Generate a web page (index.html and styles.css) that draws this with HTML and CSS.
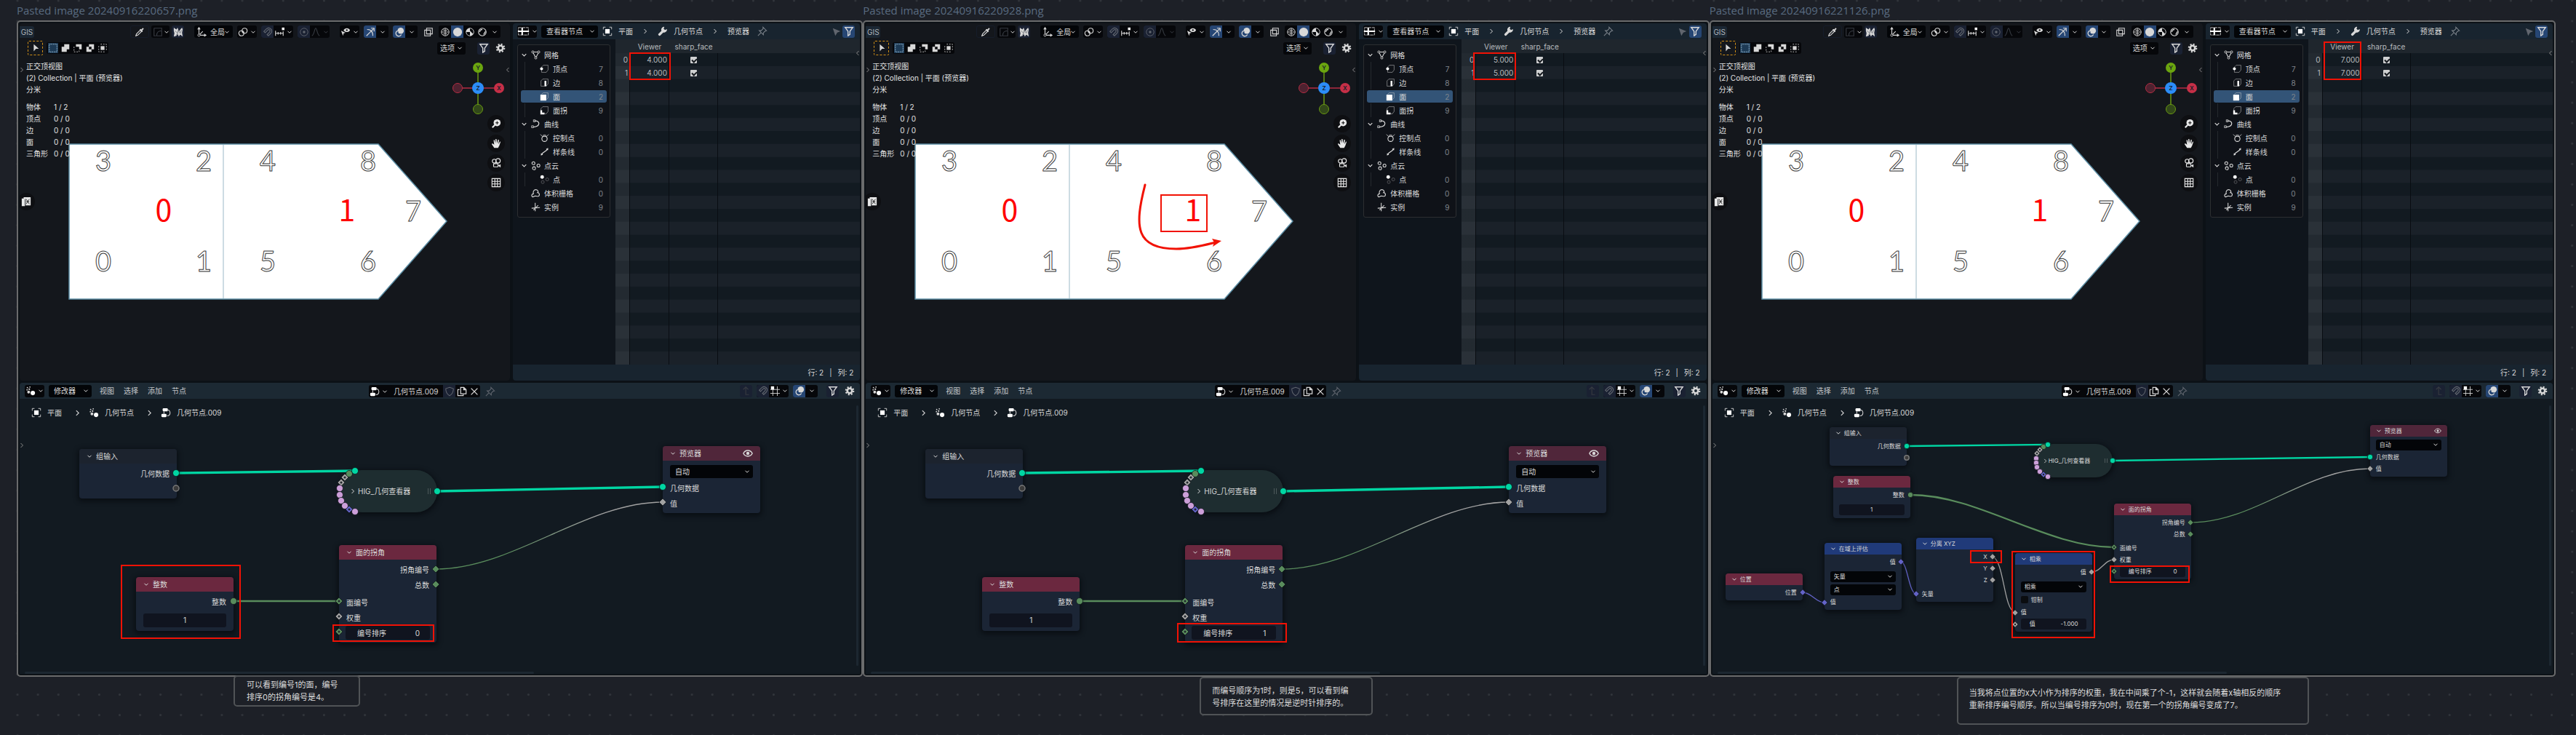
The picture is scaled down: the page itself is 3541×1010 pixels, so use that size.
FILE: index.html
```html
<!DOCTYPE html>
<html lang="zh-CN">
<head>
<meta charset="utf-8">
<title>几何节点：面的拐角</title>
<link rel="stylesheet" href="styles.css">
</head>
<body>
<svg class="sprite" aria-hidden="true">
  <symbol id="i-chev" viewBox="0 0 16 16"><path d="M3 5.500l5 5 5-5" fill="none" stroke="currentColor" stroke-width="2"/></symbol>
  <symbol id="i-right" viewBox="0 0 16 16"><path d="M5 2l6 6-6 6" fill="none" stroke="currentColor" stroke-width="2"/></symbol>
  <symbol id="i-left" viewBox="0 0 16 16"><path d="M11 2L5 8l6 6" fill="none" stroke="currentColor" stroke-width="2"/></symbol>
  <symbol id="i-dropper" viewBox="0 0 16 16"><path d="M2 14l1-3 6-6 2 2-6 6z" fill="none" stroke="currentColor" stroke-width="1.300"/><path d="M8 4l1.500-1 1 1L13 1.500 14.500 3 12 5.500l1 1L12 8z" fill="currentColor"/></symbol>
  <symbol id="i-falloff" viewBox="0 0 16 16"><path d="M2 2h12v3M2 2v12h3M6 14c0-5 3-8 8-8v8z" fill="none" stroke="currentColor" stroke-width="1.300"/></symbol>
  <symbol id="i-noise" viewBox="0 0 16 16"><path d="M1 1l4 3 2-3 2 6 3-4 2-2 1 3-1 5 1 6-4-3-2 3-2-4-2 3-4 1 1-5-1-4z" fill="currentColor"/><path d="M3 6l4 4 1-5 3 5 2-5M5 13l2-3" fill="none" stroke="#6b7078"/></symbol>
  <symbol id="i-axes" viewBox="0 0 16 16"><path d="M4 2v11h10M4 13l6-6M2 4l2-3 2 3M12 11l3 2-3 2" fill="none" stroke="currentColor" stroke-width="1.300"/><circle cx="4" cy="13" r="1.800" fill="#050608" stroke="currentColor"/></symbol>
  <symbol id="i-link" viewBox="0 0 16 16"><circle cx="10.500" cy="6" r="4" fill="none" stroke="currentColor" stroke-width="1.300"/><circle cx="5.500" cy="10" r="4" fill="none" stroke="currentColor" stroke-width="1.300"/><circle cx="8" cy="8" r="1.400" fill="currentColor"/></symbol>
  <symbol id="i-magnet" viewBox="0 0 16 16"><path d="M2 7l4-4c5-4 11 2 7 7l-4 4-2-2 4-4c2-3-1-5-3-3L4 9z" fill="none" stroke="currentColor" stroke-width="1.300"/></symbol>
  <symbol id="i-inc" viewBox="0 0 16 16"><path d="M2 6v8M6 8v4M10 8v4M14 7v7M2 10h12" fill="none" stroke="currentColor" stroke-width="1.300"/><rect x="12" y="1" width="4" height="4" fill="#fff"/></symbol>
  <symbol id="i-prop" viewBox="0 0 16 16"><circle cx="8" cy="8" r="6" fill="none" stroke="currentColor"/><circle cx="8" cy="8" r="2" fill="currentColor"/></symbol>
  <symbol id="i-bell" viewBox="0 0 16 16"><path d="M2 14C6 12 6 2 8 2s2 10 6 12" fill="none" stroke="currentColor" stroke-width="1.300"/></symbol>
  <symbol id="i-eyecur" viewBox="0 0 16 16"><path d="M1 6l7 3-3 1-1 4z" fill="currentColor"/><path d="M5 5c2-4 8-4 10 0-2 4-8 4-10 0z" fill="currentColor"/><circle cx="10" cy="5" r="1.300" fill="#08090c"/></symbol>
  <symbol id="i-gizmo" viewBox="0 0 16 16"><path d="M3 4c6 0 9 4 9 10M2 14L13 3M9 2h5v5" fill="none" stroke="currentColor" stroke-width="1.400"/></symbol>
  <symbol id="i-overlay" viewBox="0 0 16 16"><circle cx="10" cy="6" r="5" fill="currentColor"/><path d="M5 6a4.500 4.500 0 1 0 6 6" fill="none" stroke="currentColor" stroke-width="1.500"/><path d="M6 7a3 3 0 0 0 4 4" fill="none" stroke="#28456f"/></symbol>
  <symbol id="i-xray" viewBox="0 0 16 16"><path d="M5 2h9v9H5zM2 5h9v9H2z" fill="none" stroke="currentColor" stroke-width="1.200"/></symbol>
  <symbol id="i-wire" viewBox="0 0 16 16"><circle cx="8" cy="8" r="6" fill="none" stroke="currentColor"/><path d="M2 8h12M8 2v12M4 4c2 2 6 2 8 0M4 12c2-2 6-2 8 0" fill="none" stroke="currentColor"/></symbol>
  <symbol id="i-solid" viewBox="0 0 16 16"><circle cx="8" cy="8" r="7" fill="currentColor"/></symbol>
  <symbol id="i-mat" viewBox="0 0 16 16"><circle cx="8" cy="8" r="6" fill="none" stroke="currentColor"/><path d="M8 2a6 6 0 0 0-6 6h6v6a6 6 0 0 0 5-3L8 6z" fill="currentColor"/></symbol>
  <symbol id="i-render" viewBox="0 0 16 16"><circle cx="8" cy="8" r="6" fill="none" stroke="currentColor" stroke-width="1.300"/><path d="M4 8a4 4 0 0 1 4-4M10 12l3-5" fill="none" stroke="currentColor" stroke-width="1.500"/></symbol>
  <symbol id="i-filter" viewBox="0 0 16 16"><path d="M2 2h12l-4.500 6v5l-3 2V8z" fill="none" stroke="currentColor" stroke-width="1.500"/></symbol>
  <symbol id="i-gear" viewBox="0 0 16 16"><circle cx="8" cy="8" r="3.700" fill="none" stroke="currentColor" stroke-width="3"/><circle cx="8" cy="8" r="6" fill="none" stroke="currentColor" stroke-width="2.500" stroke-dasharray="2.300 2.412"/></symbol>
  <symbol id="i-arrow" viewBox="0 0 16 16"><path d="M5 2l8 7H8.500L5 13z" fill="currentColor"/></symbol>
  <symbol id="i-arrow2" viewBox="0 0 16 16"><path d="M2 3l12 5-5 2-3 5z" fill="currentColor"/></symbol>
  <symbol id="i-s1" viewBox="0 0 16 16"><rect width="16" height="16" fill="#1d3a55"/><rect x="2" y="2" width="12" height="12" fill="none" stroke="#9fc0d8" stroke-dasharray="2 1"/></symbol>
  <symbol id="i-s2" viewBox="0 0 16 16"><path d="M6 2h8v8h-4v4H2V6h4z" fill="currentColor"/></symbol>
  <symbol id="i-s3" viewBox="0 0 16 16"><path d="M5 2h9v8h-4V6H5z" fill="currentColor"/><path d="M2 6v8h8v-3" fill="none" stroke="currentColor" stroke-dasharray="2 2"/></symbol>
  <symbol id="i-s4" viewBox="0 0 16 16"><path d="M6 2h8v8h-4v4H2V6h4zM6 6v4h4V6z" fill="currentColor" fill-rule="evenodd"/></symbol>
  <symbol id="i-s5" viewBox="0 0 16 16"><rect x="5" y="5" width="6" height="6" fill="currentColor"/><path d="M5 2h9v9M2 5v9h9" fill="none" stroke="currentColor" stroke-dasharray="2 2"/></symbol>
  <symbol id="i-zoom" viewBox="0 0 16 16"><circle cx="9.500" cy="6.500" r="5.500" fill="currentColor"/><path d="M6 10l-4 4" stroke="currentColor" stroke-width="2.500"/><path d="M9.500 4v5M7 6.500h5" stroke="#111" stroke-width="1.200"/></symbol>
  <symbol id="i-hand" viewBox="0 0 16 16"><path d="M5 15L1 9l1-1 3 2-1-7 1.500-.500L7 8 7 1h1.500L9.500 8 11 2l1.500.500L11.500 9 14 5l1 .500-2 6-2 3.500z" fill="currentColor"/></symbol>
  <symbol id="i-cam" viewBox="0 0 16 16"><circle cx="5" cy="5" r="3" fill="none" stroke="currentColor" stroke-width="1.300"/><circle cx="11" cy="4.500" r="3.500" fill="none" stroke="currentColor" stroke-width="1.300"/><rect x="4" y="9" width="7" height="5" rx="1" fill="none" stroke="currentColor" stroke-width="1.300"/><path d="M11 12l4-2v5z" fill="currentColor"/></symbol>
  <symbol id="i-grid" viewBox="0 0 16 16"><path d="M1.500 1.500h13v13h-13zM1.500 6h13M1.500 10h13M6 1.500v13M10 1.500v13" fill="none" stroke="currentColor" stroke-width="1.300"/></symbol>
  <symbol id="i-strip" viewBox="0 0 16 16"><path d="M1 3h5v12H1zM4 1h11v13H7V4H4z" fill="currentColor"/><path d="M8 4l5 8M13 4l-5 8M8 8h5" stroke="#222"/></symbol>
  <symbol id="i-sheet" viewBox="0 0 20 16"><path d="M2 2h16v12H2z" fill="none" stroke="currentColor" stroke-dasharray="5 1"/><path d="M8 2v12M1 8h18" stroke="#fff" stroke-width="2.500"/></symbol>
  <symbol id="i-object" viewBox="0 0 16 16"><rect x="4.500" y="4.500" width="7" height="7" fill="#fff"/><path d="M1.500 5V1.500H5M11 1.500h3.500V5M14.500 11v3.500H11M5 14.500H1.500V11" fill="none" stroke="currentColor"/></symbol>
  <symbol id="i-wrench" viewBox="0 0 16 16"><path d="M3 13L9 7" stroke="currentColor" stroke-width="4" stroke-linecap="round"/><path d="M14.500 4.500A4.500 4.500 0 1 1 10.500 1L9.500 4l2 2z" fill="currentColor"/></symbol>
  <symbol id="i-pin" viewBox="0 0 16 16"><path d="M9 1.500L14.500 7l-2 .500-3 3 0 3L3 7h3l3-3zM5.500 10.500L1 15" fill="none" stroke="currentColor" stroke-width="1.200"/></symbol>
  <symbol id="i-mesh" viewBox="0 0 16 16"><path d="M3 3h10L8 13z" fill="none" stroke="currentColor" stroke-width="1.300"/><g fill="#101318" stroke="currentColor" stroke-width="1.200"><circle cx="3" cy="3" r="1.800"/><circle cx="13" cy="3" r="1.800"/><circle cx="8" cy="13" r="1.800"/></g></symbol>
  <symbol id="i-vert" viewBox="0 0 16 16"><path d="M3 5l3-3h8v8l-3 4H3z" fill="none" stroke="currentColor" opacity=".6"/><circle cx="3" cy="8" r="2.500" fill="#fff"/></symbol>
  <symbol id="i-edge" viewBox="0 0 16 16"><path d="M2 5l3-3h9v8l-3 4H2z" fill="none" stroke="currentColor" opacity=".6"/><rect x="8" y="5" width="3" height="9" fill="#fff"/></symbol>
  <symbol id="i-face" viewBox="0 0 16 16"><path d="M3 4l3-2h8v8l-2 3" fill="none" stroke="currentColor" opacity=".6"/><rect x="1" y="5" width="10" height="10" fill="#fff"/></symbol>
  <symbol id="i-corner" viewBox="0 0 16 16"><path d="M2 9V5l3-3h9v8l-3 4H8" fill="none" stroke="currentColor" opacity=".6"/><path d="M1 8h3v4h4v3H1z" fill="#fff"/></symbol>
  <symbol id="i-curve" viewBox="0 0 16 16"><path d="M6 3c9-2 11 9-2 10" fill="none" stroke="currentColor" stroke-width="1.500"/><rect x="4" y="1" width="3" height="3" fill="none" stroke="currentColor"/><rect x="1" y="11" width="3" height="3" fill="none" stroke="currentColor"/></symbol>
  <symbol id="i-ctrl" viewBox="0 0 16 16"><circle cx="8" cy="9.500" r="4.500" fill="none" stroke="currentColor" stroke-width="1.400"/><path d="M1 2l4 4M15 2l-4 4M5 4l3-1 3 1" fill="none" stroke="currentColor"/></symbol>
  <symbol id="i-spline" viewBox="0 0 16 16"><path d="M2 14l3-4 6-4 3-4M2 11l3 2M11 3l3 2" fill="none" stroke="currentColor" stroke-width="1.500"/></symbol>
  <symbol id="i-cloud" viewBox="0 0 16 16"><g fill="none" stroke="currentColor" stroke-width="1.300"><circle cx="4" cy="4" r="2.500"/><circle cx="12.500" cy="8" r="2.500"/><circle cx="5" cy="12.500" r="2.500"/></g></symbol>
  <symbol id="i-point" viewBox="0 0 16 16"><circle cx="4" cy="4" r="3" fill="#fff"/><g fill="none" stroke="currentColor" opacity=".4"><circle cx="12.500" cy="8" r="2.500"/><circle cx="5" cy="12.500" r="2.500"/></g></symbol>
  <symbol id="i-volume" viewBox="0 0 16 16"><path d="M2 14c-2-3 0-5 2-5-1-4 1-7 4-7s5 3 3 5c3 0 4 4 2 6-3 1-5-1-7 0s-3 2-4 1z" fill="none" stroke="currentColor" stroke-width="1.400"/></symbol>
  <symbol id="i-inst" viewBox="0 0 16 16"><path d="M7 1v14M1 10l14-1M4 13l8-8" fill="none" stroke="currentColor" stroke-width="1.300"/></symbol>
  <symbol id="i-geo" viewBox="0 0 16 16"><circle cx="11.500" cy="11.500" r="3.500" fill="#fff"/><circle cx="5" cy="10" r="2.200" fill="currentColor"/><g fill="currentColor"><circle cx="3" cy="3" r="1"/><circle cx="7" cy="2" r="1"/><circle cx="6" cy="5.500" r="1.300"/><circle cx="2.500" cy="6.500" r="1"/></g></symbol>
  <symbol id="i-tree" viewBox="0 0 16 16"><rect x="3" y="1" width="8" height="5" rx="1.500" fill="#fff"/><rect x="1" y="10" width="8" height="5" rx="1.500" fill="#fff"/><path d="M11 4c5 0 5 9-1 9M5 6v4" fill="none" stroke="currentColor" stroke-width="1.200"/></symbol>
  <symbol id="i-shield" viewBox="0 0 16 16"><path d="M8 1.500l6 2c0 5-2 9-6 11-4-2-6-6-6-11z" fill="none" stroke="currentColor" stroke-width="1.200"/></symbol>
  <symbol id="i-copy" viewBox="0 0 16 16"><path d="M6 1.500h5l3.500 3.500v6.500H6zM4 5H1.500v9.500H10v-2" fill="none" stroke="currentColor" stroke-width="1.400"/><path d="M10 1v5h5z" fill="currentColor"/></symbol>
  <symbol id="i-close" viewBox="0 0 16 16"><path d="M3 3l10 10M13 3L3 13" stroke="currentColor" stroke-width="1.500"/></symbol>
  <symbol id="i-up" viewBox="0 0 16 16"><path d="M12 14H7V2M3 6l4-4 4 4" fill="none" stroke="currentColor" stroke-width="1.300"/></symbol>
  <symbol id="i-snapgrid" viewBox="0 0 16 16"><path d="M5 4v12M12 1v15M1 6h15M1 12h15" fill="none" stroke="currentColor"/><rect x="2" y="1" width="5" height="5" fill="#fff"/></symbol>
  <symbol id="i-eye" viewBox="0 0 16 16"><path d="M1 8c3-6 11-6 14 0-3 6-11 6-14 0z" fill="none" stroke="currentColor" stroke-width="1.600"/><circle cx="8" cy="8" r="2.500" fill="currentColor"/></symbol>
</svg>
<main class="board" id="board"></main>
<script src="board.js"></script>
</body>
</html>
```
FILE: styles.css
```css
* { box-sizing: border-box; }
body {
  margin: 0;
  min-height: 100vh;
  background-color: #1d2027;
  background-image: radial-gradient(circle at 14px 14px, #31353b 1px, transparent 2px);
  background-size: calc(100% / 126) calc(100% / 36);
  background-position: 10px 15px;
  color: #d8d8d8;
  font: 10px/16px Inter, "Noto Sans CJK SC", sans-serif;
}
button, input, select {
  margin: 0; padding: 0; border: 0; background: none; color: inherit;
  font: inherit; appearance: none; outline: 0; min-width: 0;
}
.sprite { position: absolute; width: 0; height: 0; }
.ic { width: 14px; height: 14px; flex: none; display: block; }
.ic.sm { width: 8px; height: 8px; }
.ic.wide { width: 17px; }

.board { display: grid; grid-template-columns: repeat(3, minmax(0, 1fr)); padding: 0 28px 0 23px; }
.card-title { margin: 0; height: 28px; font: 15px/28px "Open Sans", sans-serif; color: #596b80; white-space: nowrap; }
.panel {
  position: relative; border: 2px solid #6a6b6c; border-radius: 5px;
  background: #0c1116; padding: 2px; overflow: hidden;
  display: flex; flex-direction: column; gap: 3px;
}
.top { display: grid; grid-template-columns: 674px minmax(0, 1fr); gap: 4px; height: 491px; }
.marks { position: absolute; left: -2px; top: -2px; width: 1164px; height: 900px; pointer-events: none; }
.marks rect { fill: none; stroke: #f11205; stroke-width: 2; }
.marks .stroke { fill: none; stroke: #f11205; stroke-width: 3; stroke-linecap: round; }
.marks .head { fill: #f11205; }

/* toolbars */
.bar { display: flex; align-items: center; gap: 6px; }
.push { margin-left: auto; }
.grp { display: flex; height: 17px; background: #06070a; border-radius: 3px; align-items: center; overflow: hidden; flex: none; }
.grp > button, .tb { height: 17px; min-width: 17px; display: flex; align-items: center; justify-content: center; gap: 3px; padding: 0 1px; flex: none; }
.grp > .mini { min-width: 8px; padding: 0; }
.tint { background: #1a2132; }
.blue { background: #264674; }
.dim { color: #60656e; }
.faint { color: #363a41; }
.grp > .pick { width: 27px; padding: 0; }
.tb { border-radius: 3px; }
.drop { position: relative; display: flex; align-items: center; background: #030508; border-radius: 3px; height: 17px; flex: none; }
.drop select { width: 100%; height: 100%; padding: 0 14px 0 7px; }
.drop .ic { position: absolute; right: 4px; pointer-events: none; }

/* 3D viewport */
.view { position: relative; background: #14171c; border-radius: 4px; overflow: hidden; padding-top: 3px; }
.scene { position: absolute; left: 0; top: 0; width: 674px; height: 491px; }
.view .bar, .info, .stats { position: relative; }
.gis { width: 20px; height: 16px; background: #1b2733; border-radius: 0 3px 3px 0; flex: none; text-align: center; color: #aeb4ba; }
.tools { padding-right: 14px; height: 17px; }
.tools .first { margin-left: 126px; margin-right: -3px; width: 26px; border: 1px solid #161d2a; }
.tools .second { margin-right: -3px; }
.tools .sp { margin-left: 8px; }
.tools .orient { width: 53px; }
.orient select { padding-left: 22px; padding-right: 10px; }
.drop .lead { left: 3px; right: auto; }
.modes { padding: 0 5px 0 11px; height: 20px; margin-top: 4px; }
.modes .active { width: 21px; height: 20px; border: 1px dashed #d08f17; border-radius: 2px; }
.modes .grp { height: 16px; margin-left: -1px; }
.modes .opt { width: 39px; background: #06070a; }
.modes .flt { margin-left: 10px; }
.info { margin: 7px 0 0 9px; color: #e2e2e2; }
.info p { margin: 0; }
.stats { margin: 8px 0 0 9px; border-collapse: collapse; color: #e2e2e2; }
.stats td, .stats th { padding: 0; font-weight: 400; text-align: left; height: 16px; width: 38px; white-space: nowrap; }
.nav { position: absolute; right: 7px; top: 126px; display: grid; gap: 3px; }
.round { width: 24px; height: 24px; border-radius: 50%; background: #0e0f12; display: flex; align-items: center; justify-content: center; color: #e8e8e8; }
.strip { position: absolute; left: -3px; top: 233px; }
.side-l { position: absolute; left: -1px; top: 60px; color: #888; }
.side-r { position: absolute; right: -1px; top: 60px; color: #888; }
.outline { font: 38px Lato, sans-serif; fill: #fff; stroke: #3b3b3b; stroke-width: 1; text-anchor: middle; }
.facenum { font: 41px "Noto Sans CJK SC", sans-serif; fill: #f00; text-anchor: middle; }
.axis { font: 600 8px Inter, sans-serif; text-anchor: middle; fill: #17202a; }

/* spreadsheet */
.sheet { display: grid; grid-template-rows: 22px 1fr 22px; border-radius: 4px; overflow: hidden; background: #18242f; position: relative; }
.sheet .side-r { top: 37px; z-index: 1; }
.sheet-bar { padding: 0 7px 0 6px; gap: 0; }
.sheet-bar .drop { width: 78px; margin: 0 6px; }
.sheet-bar .crumb { margin-left: 8px; }
.sheet-bar .sep { margin: 0 13px; }
.sheet-bar .pin { margin-left: 11px; color: #7b828a; }
.sheet-main { display: grid; grid-template-columns: 141px minmax(0, 1fr); min-height: 0; }
.tree { background: #0f151c; padding: 7px 7px 0 6px; }
.tree ul { list-style: none; margin: 0; padding: 4px 4px; border: 1px solid #2c2e31; border-radius: 3px; background: #0f1218; }
.tree button { width: 100%; height: 19px; display: flex; align-items: center; gap: 5px; text-align: left; }
.tree .ic { width: 13px; height: 13px; }
.tree .ic.sm { width: 9px; height: 9px; }
.tree .root { padding-left: 14px; }
.tree .open { padding-left: 0; }
.tree .kid { padding-left: 26px; background: linear-gradient(#25292e, #25292e) 5px 0 / 1px 100% no-repeat; }
.tree .on { background: #335477; border-radius: 3px; height: 17px; margin: 1px 0; }
.tree .num { margin-left: auto; padding-right: 5px; color: #80868d; }
.cells {
  background: linear-gradient(#1f262d, #1f262d) 0 0 / 100% 19px no-repeat;
  position: relative; display: flex; flex-direction: column;
}
.cells::before {
  content: ""; position: absolute; left: 0; right: 0; top: 19px; bottom: 0;
  background: linear-gradient(to right, #ffffff12 19px, #090d12 19px, #090d12 20px, transparent 20px, transparent 73px, #090d12 73px, #090d12 74px, transparent 74px, transparent 140px, #090d12 140px, #090d12 141px, transparent 141px),
    linear-gradient(#121a21 50%, #1a2129 50%) 0 0 / 100% calc(100% / 12);
}
.cells table { position: relative; border-collapse: collapse; width: 141px; table-layout: fixed; color: #b9bcbf; }
.cells .c-index { width: 20px; }
.cells .c-value { width: 54px; }
.cells th, .cells td { padding: 0; font-weight: 400; height: 18px; text-align: right; }
.cells thead th { height: 19px; text-align: center; }
.cells tbody th, .cells tbody td { padding-right: 3px; }
.cells tbody .tick { padding: 0; text-align: center; }
.cells input { width: 9px; height: 9px; background: #cfd0d1; border-radius: 1px; display: block; margin: 0 auto; position: relative; }
.cells input::after { content: ""; position: absolute; left: 2px; top: 2px; width: 5px; height: 3px; border: solid #15191e; border-width: 0 0 2px 2px; transform: rotate(-45deg); }
.status { display: flex; justify-content: flex-end; align-items: center; gap: 8px; padding-right: 9px; }

/* node editor */
.editor { background: #121a21; border-radius: 4px 4px 0 0; overflow: hidden; }
.ed-bar { background: #1c2933; height: 22px; padding: 0 6px 0 7px; position: relative; }
.ed-bar .drop { width: 59px; }
.ed-bar .menu { margin-left: 5px; padding: 0; color: #c3c6c9; }
.ed-bar .menu + .menu { margin-left: 7px; }
.ed-bar .data { position: absolute; left: 480px; top: 3px; display: flex; gap: 5px; }
.data input { width: 75px; height: 17px; padding-left: 7px; }
.canvas { position: relative; height: 378px; }
.canvas .wires { position: absolute; left: 0; top: 0; width: 1160px; height: 378px; overflow: visible; pointer-events: none; }
.path { position: relative; height: 38px; padding-left: 16px; gap: 7px; }
.path .ic { margin-right: 1px; }
.path .sep { margin: 0 4px 0 10px; width: 9px; height: 9px; }
.vscroll { position: absolute; right: 2px; top: 9px; width: 3px; height: 358px; background: #1c2731; border-radius: 2px; }
.hscroll { position: absolute; left: 7px; bottom: 0; width: 700px; height: 3px; background: #1c2731; border-radius: 2px; }
.node { position: absolute; width: 134px; background: #1b2535; border-radius: 4px; box-shadow: 0 2px 6px 2px #06090daa; padding-bottom: 3px; white-space: nowrap; }
.node h3 { margin: 0 0 3px; height: 20px; font: inherit; display: flex; align-items: center; gap: 5px; padding: 0 10px; border-radius: 4px 4px 0 0; background: #1c232e; }
.node h3 .eye { margin-left: auto; }
.node.red h3 { background: #6b283f; }
.node.wine h3 { background: #50263a; }
.node.navy h3 { background: #203a79; }
.row { height: 21px; display: flex; align-items: center; padding: 0 10px; }
.row.out { justify-content: flex-end; }
.row.gap { height: 3px; }
.row.sel, .row.value { height: 24px; }
.row .drop { width: 100%; height: 18px; }
.field { width: 100%; height: 19px; background: #10141f; border-radius: 3px; display: flex; align-items: center; justify-content: space-between; padding: 0 14px 0 16px; }
.field input { width: 36px; text-align: right; }
.row.value .field { padding: 0; }
.row.value input { width: 100%; text-align: center; }
.row.field-row { padding: 0 9px; }
.row.check { gap: 4px; }
.row.check input { width: 10px; height: 10px; background: #0b0d10; border-radius: 2px; }
.small .node { width: 106px; font-size: 8px; line-height: 12px; }
.small .node h3 { height: 16px; margin-bottom: 2px; gap: 4px; padding: 0 8px; }
.small .node h3 .ic { width: 8px; height: 8px; }
.small .node h3 .eye { width: 10px; height: 10px; }
.small .row { height: 16px; padding: 0 8px; }
.small .row.gap { height: 3px; }
.small .row.sel, .small .row.value, .small .row.check { height: 18px; }
.small .row .drop { height: 15px; }
.small .row .drop select { padding-left: 5px; }
.small .field { height: 15px; padding: 0 11px 0 12px; }
.small .field input { width: 28px; }
.small .row.value .field { padding: 0; }
.small .row.value input { width: 100%; }
.pill { position: absolute; width: 133px; height: 58px; border-radius: 29px; background: #1e2d30; box-shadow: 0 2px 6px 2px #06090daa; display: flex; align-items: center; gap: 3px; padding: 0 9px 0 13px; white-space: nowrap; }
.pill .grip { margin-left: auto; width: 4px; height: 8px; border: solid #4d595b; border-width: 0 1px; }
.small .pill { width: 105px; height: 46px; border-radius: 23px; font-size: 8px; gap: 1px; padding: 0 7px 0 9px; }
.small .pill .ic { width: 7px; height: 7px; }
.small .pill .grip { height: 6px; }

/* comments below each capture */
.note { width: max-content; border: 2px solid #505356; border-radius: 5px; background: #1d2027; font-size: 11px; line-height: 17px; color: #dcdcdc; margin: 0; white-space: pre-line; position: relative; }
.note-1 { margin-left: 298px; margin-top: -2px; padding: 3px 29px 2px 16px; }
.note-2 { margin-left: 463px; padding: 9px 31px 6px 15px; }
.note-3 { margin-left: 340px; padding: 12px 37px 16px 15px; }
```
FILE: board.js
```js
const ic = (name, cls = '') => `<svg class="ic ${cls}" aria-hidden="true"><use href="#i-${name}"/></svg>`;
const btn = (name, label, cls = '', extra = '') => `<button type="button" class="${cls}" aria-label="${label}">${ic(name)}${extra}</button>`;
const chev = ic('chev', 'sm');
const drop = (label, value, cls = '', lead = '') => `<span class="drop ${cls}">${lead}<select aria-label="${label}"><option>${value}</option></select>${chev}</span>`;

const TEAL = '#00d6a3', GREEN = '#598c5c', GREY = '#a1a1a1', PINK = '#cc9fd9', BLUE = '#6363c7';

/* node trees, in canvas units; each socket is [x, y, colour, shape] */
const large = {
  x0: 25, pill: [468, 646],
  nodes: [
    { at: [109, 617], title: '组输入', rows: [['out', '几何数据'], ['out', '']] },
    { at: [187, 793], kind: 'red', title: '整数', rows: [['out', '整数'], ['gap'], ['value', '1']] },
    { at: [466, 749], kind: 'red', title: '面的拐角', rows: [['out', '拐角编号'], ['out', '总数'], ['gap'], ['in', '面编号'], ['in', '权重'], ['field', '编号排序', 'ORDER']] },
    { at: [911, 613], kind: 'wine', title: '预览器', eye: true, rows: [['sel', '自动'], ['in', '几何数据'], ['in', '值']] },
  ],
  wires: [['M242 650L488 647', TEAL, 3], ['M601 675L911 669', TEAL, 3], ['M321 826L466 826', GREEN, 2], ['M599 782C705 782 805 690 911 690', 'fade', 1]],
  sockets: [[242, 650, TEAL], [242, 671, '#3b3b3b', 'ring'], [321, 826, GREEN], [599, 782, GREEN, 'd'], [599, 803, GREEN, 'd'],
    [466, 826, GREEN, 'h'], [466, 847, GREY, 'h'], [466, 868, GREEN, 'h'], [911, 669, TEAL], [911, 690, GREY, 'd'], [601, 675, TEAL],
    [480, 651, GREEN], [474, 656, GREY, 'h'], [469, 663, GREY, 'h'], [467, 671, PINK], [467, 680, PINK], [469, 688, PINK], [474, 695, PINK], [480, 700, BLUE, 'h'], [488, 703, PINK], [488, 647, TEAL]],
};
const small = {
  x0: 2352, size: 'small', pill: [2799, 610],
  nodes: [
    { at: [2515, 587], title: '组输入', rows: [['out', '几何数据'], ['out', '']] },
    { at: [2520, 654], kind: 'red', title: '整数', rows: [['out', '整数'], ['gap'], ['value', '1']] },
    { at: [2372, 788], kind: 'red', title: '位置', rows: [['out', '位置']] },
    { at: [2508, 746], kind: 'navy', title: '在域上评估', rows: [['out', '值'], ['gap'], ['sel', '矢量'], ['sel', '点'], ['in', '值']] },
    { at: [2634, 739], kind: 'navy', title: '分离 XYZ', rows: [['out', 'X'], ['out', 'Y'], ['out', 'Z'], ['gap'], ['in', '矢量']] },
    { at: [2770, 760], kind: 'navy', title: '相乘', rows: [['out', '值'], ['gap'], ['sel', '相乘'], ['check', '钳制'], ['in', '值'], ['field', '值', '-1.000']] },
    { at: [2906, 692], kind: 'red', title: '面的拐角', rows: [['out', '拐角编号'], ['out', '总数'], ['gap'], ['in', '面编号'], ['in', '权重'], ['field', '编号排序', 'ORDER']] },
    { at: [3258, 584], kind: 'wine', title: '预览器', eye: true, rows: [['sel', '自动'], ['in', '几何数据'], ['in', '值']] },
  ],
  wires: [['M2621 613L2815 611', TEAL, 2], ['M2904 633L3258 628', TEAL, 2], ['M2626 680C2720 680 2812 752 2906 752', GREEN, 2],
    ['M2478 814C2490 814 2496 828 2508 828', BLUE, 1], ['M2613 772C2622 772 2624 816 2634 816', BLUE, 1],
    ['M2739 765C2755 770 2754 838 2770 842', GREY, 1], ['M2875 786C2888 786 2893 769 2906 769', GREY, 1], ['M3011 718C3100 718 3169 644 3258 644', 'fade', 1]],
  sockets: [[2621, 613, TEAL], [2621, 629, '#3b3b3b', 'ring'], [2626, 680, GREEN], [2478, 814, BLUE, 'd'], [2508, 828, BLUE, 'd'], [2613, 772, BLUE, 'd'],
    [2634, 816, BLUE, 'd'], [2739, 765, GREY, 'd'], [2739, 781, GREY, 'd'], [2739, 797, GREY, 'd'], [2770, 842, GREY, 'd'], [2770, 858, GREY, 'h'], [2875, 786, GREY, 'd'],
    [2906, 752, GREEN, 'h'], [2906, 769, GREY, 'd'], [2906, 785, GREEN, 'h'], [3011, 718, GREEN, 'd'], [3011, 734, GREEN, 'd'], [3258, 628, TEAL], [3258, 644, GREY, 'd'], [2904, 633, TEAL],
    [2809, 614, GREEN], [2804, 618, GREY, 'h'], [2800, 623, GREY, 'h'], [2799, 630, PINK], [2799, 636, PINK], [2800, 642, PINK], [2804, 648, PINK], [2809, 652, BLUE, 'h'], [2815, 655, PINK], [2815, 611, TEAL]],
};

const captures = [
  { title: 'Pasted image 20240916220657.png', value: '4.000', order: '0', tree: large, x0: 23,
    boxes: [[866, 73, 55, 36], [167, 777, 163, 100], [458, 859, 138, 22]],
    note: '可以看到编号1的面，编号\n排序0的拐角编号是4。' },
  { title: 'Pasted image 20240916220928.png', value: '5.000', order: '1', tree: large, x0: 23,
    boxes: [[863, 73, 57, 36], [433, 268, 63, 50], [456, 857, 149, 25]], arrow: true,
    note: '而编号顺序为1时，则是5，可以看到编\n号排序在这里的情况是逆时针排序的。' },
  { title: 'Pasted image 20240916221126.png', value: '7.000', order: '0', tree: small, x0: 2350,
    boxes: [[3195, 58, 50, 51], [2709, 757, 42, 16], [2766, 758, 113, 118], [2901, 778, 108, 22]],
    note: '当我将点位置的x大小作为排序的权重，我在中间乘了个-1，这样就会随着x轴相反的顺序\n重新排序编号顺序。所以当编号排序为0时，现在第一个的拐角编号变成了7。' },
];

const scene = () => `<svg class="scene" viewBox="27 32 674 491" aria-hidden="true">
  <path d="M95 198H520L614 304L520 411H95Z" fill="#fff" stroke="#5a8ca3" stroke-width="1.500"/>
  <path d="M307 199V410" stroke="#bcd0da" stroke-width="1.500"/>
  <g class="outline">${[[3, 142, 235], [2, 280, 235], [4, 368, 235], [8, 506, 235], [0, 142, 373], [1, 280, 373], [5, 368, 373], [6, 506, 373], [7, 568, 304]].map(([t, x, y]) => `<text x="${x}" y="${y}">${t}</text>`).join('')}</g>
  <g class="facenum"><text x="225" y="304">0</text><text x="477" y="304">1</text></g>
  <path d="M657 93V150" stroke="#6a9a12" stroke-width="1.500"/><path d="M629 121H686" stroke="#b42d43" stroke-width="1.500"/>
  <circle cx="657" cy="93" r="7" fill="#6ba50f"/><circle cx="657" cy="150" r="6.500" fill="#32481a" stroke="#6a9a12"/>
  <circle cx="629" cy="121" r="6.500" fill="#4e2230" stroke="#b42d43"/><circle cx="686" cy="121" r="7" fill="#c62f47"/><circle cx="657" cy="121" r="8" fill="#2c8df8"/>
  <g class="axis"><text x="657" y="96">Y</text><text x="686" y="124">X</text><text x="657" y="124">Z</text></g>
</svg>`;

const viewport = () => `<section class="view" aria-label="3D 视图">${scene()}
  <div class="bar tools"><span class="gis">GIS</span>
    ${btn('dropper', '吸管', 'tb first')}
    <span class="grp second"><button type="button" class="faint" aria-label="衰减">${ic('falloff')}</button><button type="button" aria-label="衰减选项" class="mini">${chev}</button></span>
    ${btn('noise', '纹理', 'tb tint')}
    ${drop('坐标系', '全局', 'orient sp', ic('axes', 'lead'))}
    <span class="grp">${btn('link', '轴心点', 'pick', chev)}</span>
    <span class="grp">${btn('magnet', '吸附', 'tint dim')}${btn('inc', '吸附到', 'pick', chev)}</span>
    <span class="grp">${btn('prop', '衰减编辑', 'tint dim')}${btn('bell', '衰减类型', 'pick faint', chev)}</span>
    <span class="grp sp">${btn('eyecur', '可见性', 'pick', chev)}</span>
    <span class="grp">${btn('gizmo', '控件', 'blue')}<button type="button" aria-label="控件选项">${chev}</button></span>
    <span class="grp">${btn('overlay', '叠加层', 'blue')}<button type="button" aria-label="叠加层选项">${chev}</button></span>
    ${btn('xray', '透视', 'tb')}
    <span class="grp push">${btn('wire', '线框')}${btn('solid', '实体', 'blue')}${btn('mat', '材质预览')}${btn('render', '渲染')}<button type="button" aria-label="着色选项">${chev}</button></span>
  </div>
  <div class="bar modes">${btn('arrow', '选择', 'tb active')}
    <span class="grp">${['s1', 's2', 's3', 's4', 's5'].map((n, i) => btn(n, '选择模式 ' + (i + 1))).join('')}</span>
    <button type="button" class="tb opt push">选项 ${chev}</button>${btn('filter', '过滤', 'tb tint flt')}${btn('gear', '设置', 'tb')}
  </div>
  <div class="info"><p>正交顶视图</p><p>(2) Collection | 平面 (预览器)</p><p>分米</p></div>
  <table class="stats">${[['物体', '1 / 2'], ['顶点', '0 / 0'], ['边', '0 / 0'], ['面', '0 / 0'], ['三角形', '0 / 0']].map(([a, b]) => `<tr><th scope="row">${a}</th><td>${b}</td></tr>`).join('')}</table>
  <div class="nav">${btn('zoom', '缩放', 'round')}${btn('hand', '平移', 'round')}${btn('cam', '相机', 'round')}${btn('grid', '正交', 'round')}</div>
  ${btn('strip', '工具', 'round strip')}<span class="side-l">${ic('right', 'sm')}</span><span class="side-r">${ic('left', 'sm')}</span>
</section>`;

const treeRows = [['open', 'mesh', '网格'], ['kid', 'vert', '顶点', 7], ['kid', 'edge', '边', 8], ['kid on', 'face', '面', 2], ['kid', 'corner', '面拐', 9],
  ['open', 'curve', '曲线'], ['kid', 'ctrl', '控制点', 0], ['kid', 'spline', '样条线', 0], ['open', 'cloud', '点云'], ['kid', 'point', '点', 0], ['root', 'volume', '体积栅格', 0], ['root', 'inst', '实例', 9]];

const sheet = (value) => `<section class="sheet" aria-label="电子表格">
  <div class="bar sheet-bar"><span class="grp"><button type="button" class="pick" aria-label="编辑器类型">${ic('sheet', 'wide')}${chev}</button></span>${drop('数据源', '查看器节点')}
    ${ic('object')}<span class="crumb">平面</span>${ic('right', 'sm sep')}${ic('wrench')}<span class="crumb">几何节点</span>${ic('right', 'sm sep')}<span>预览器</span>${ic('pin', 'pin')}
    ${btn('arrow2', '仅选中项', 'tb push dim')}${btn('filter', '过滤', 'tb blue')}</div>
  <div class="sheet-main">
    <nav class="tree"><ul>${treeRows.map(([c, i, t, n]) => `<li><button type="button" class="${c}">${c === 'open' ? ic('chev', 'sm') : ''}${ic(i)}<span>${t}</span>${n === undefined ? '' : `<span class="num">${n}</span>`}</button></li>`).join('')}</ul></nav>
    <div class="cells"><table><colgroup><col class="c-index"><col class="c-value"><col></colgroup>
      <thead><tr><th></th><th scope="col">Viewer</th><th scope="col">sharp_face</th></tr></thead>
      <tbody>${[0, 1].map(i => `<tr><th scope="row">${i}</th><td>${value}</td><td class="tick"><input type="checkbox" checked aria-label="sharp_face ${i}"></td></tr>`).join('')}</tbody></table></div>
  </div>
  <div class="status"><span>行: 2</span><span>|</span><span>列: 2</span></div>
  <span class="side-r">${ic('left', 'sm')}</span>
</section>`;

function row([type, text, value], order) {
  const v = value === 'ORDER' ? order : value;
  if (type === 'gap') return '<div class="row gap"></div>';
  if (type === 'value') return `<div class="row value"><span class="field"><input type="text" value="${text}" aria-label="整数"></span></div>`;
  if (type === 'sel') return `<div class="row sel">${drop(text, text)}</div>`;
  if (type === 'check') return `<label class="row check"><input type="checkbox">${text}</label>`;
  if (type === 'field') return `<div class="row field-row"><label class="field">${text}<input type="text" value="${v}"></label></div>`;
  return `<div class="row ${type}">${text}</div>`;
}

function socket([x, y, c, shape], k) {
  const r = 4 * k;
  if (shape === 'ring') return `<circle cx="${x}" cy="${y}" r="${r}" fill="${c}" stroke="#777" stroke-width="1.500"/>`;
  if (!shape) return `<circle cx="${x}" cy="${y}" r="${r + .5}" fill="${c}" stroke="#0b1015" stroke-width=".7"/>`;
  const d = r + 1;
  return `<path d="M${x} ${y - d}L${x + d} ${y}L${x} ${y + d}L${x - d} ${y}Z" fill="${c}" stroke="#0b1015" stroke-width=".7"/>` + (shape === 'h' ? `<circle cx="${x}" cy="${y}" r="${1.5 * k}" fill="#20262c"/>` : '');
}

function editor(c, i) {
  const t = c.tree, k = t.size ? .8 : 1, left = t.size ? t.x0 : t.x0;
  const box = `${left} 548 1160 378`;
  const pos = ([x, y]) => `left:${x - left}px;top:${y - 548}px`;
  const [fx, tx] = t.size ? [3011, 3258] : [599, 911];
  return `<section class="editor" aria-label="节点编辑器">
  <div class="bar ed-bar"><span class="grp">${btn('geo', '编辑器类型', 'pick', chev)}</span>${drop('上下文', '修改器')}
    ${['视图', '选择', '添加', '节点'].map(m => `<button type="button" class="menu">${m}</button>`).join('')}
    <div class="data"><span class="grp">${btn('tree', '节点树', 'pick', chev)}<input type="text" value="几何节点.009" aria-label="节点树名称">${btn('shield', '伪用户', 'tint dim')}${btn('copy', '复制')}${btn('close', '移除')}</span>${btn('pin', '固定', 'tb dim')}</div>
    ${btn('up', '上级', 'tb tint push faint')}
    <span class="grp">${btn('magnet', '吸附', 'tint dim')}${btn('snapgrid', '吸附到', 'pick', chev)}</span>
    <span class="grp">${btn('overlay', '叠加层', 'blue')}<button type="button" aria-label="叠加层选项">${chev}</button></span>
    <span></span>${btn('filter', '过滤', 'tb tint')}${btn('gear', '设置', 'tb')}
  </div>
  <div class="canvas ${t.size || ''}">
    <div class="bar path">${ic('object')}<span>平面</span>${ic('right', 'sm sep')}${ic('geo')}<span>几何节点</span>${ic('right', 'sm sep')}${ic('tree')}<span>几何节点.009</span></div>
    <i class="vscroll"></i><i class="hscroll"></i>
    <svg class="wires" viewBox="${box}"><defs><linearGradient id="fade${i}" gradientUnits="userSpaceOnUse" x1="${fx}" y1="0" x2="${tx}" y2="0"><stop offset=".3" stop-color="${GREEN}"/><stop offset=".7" stop-color="${GREY}"/></linearGradient></defs>
      ${t.wires.map(([d, col, w]) => `<path d="${d}" fill="none" stroke="${col === 'fade' ? `url(#fade${i})` : col}" stroke-width="${w + .3}"/>`).join('')}</svg>
    ${t.nodes.map(n => `<article class="node ${n.kind || ''}" style="${pos(n.at)}"><h3>${ic('chev', 'sm')}${n.title}${n.eye ? ic('eye', 'eye') : ''}</h3>${n.rows.map(r => row(r, c.order)).join('')}</article>`).join('')}
    <article class="pill" style="${pos(t.pill)}">${ic('right', 'sm')}<span>HIG_几何查看器</span><i class="grip"></i></article>
    <svg class="wires" viewBox="${box}">${t.sockets.map(s => socket(s, k)).join('')}</svg>
    <span class="side-l">${ic('right', 'sm')}</span>
  </div></section>`;
}

const marks = (c) => `<svg class="marks" viewBox="${c.x0} 28 1164 900" aria-hidden="true">${c.boxes.map(([x, y, w, h]) => `<rect x="${x}" y="${y}" width="${w}" height="${h}"/>`).join('')}
  ${c.arrow ? '<path class="stroke" d="M411 254C396 312 398 342 454 342C474 342 492 337 508 333"/><path class="head" d="M516 331L503 328L506 333L504 339Z"/>' : ''}</svg>`;

/* the editor section starts 2px inside the panel's padding */
large.x0 = 27;
small.x0 = 2354;

document.getElementById('board').innerHTML = captures.map((c, i) => `<section class="capture">
  <h2 class="card-title">${c.title}</h2>
  <div class="panel"><div class="top">${viewport()}${sheet(c.value)}</div>${editor(c, i)}${marks(c)}</div>
  <p class="note note-${i + 1}">${c.note}</p></section>`).join('');
```
